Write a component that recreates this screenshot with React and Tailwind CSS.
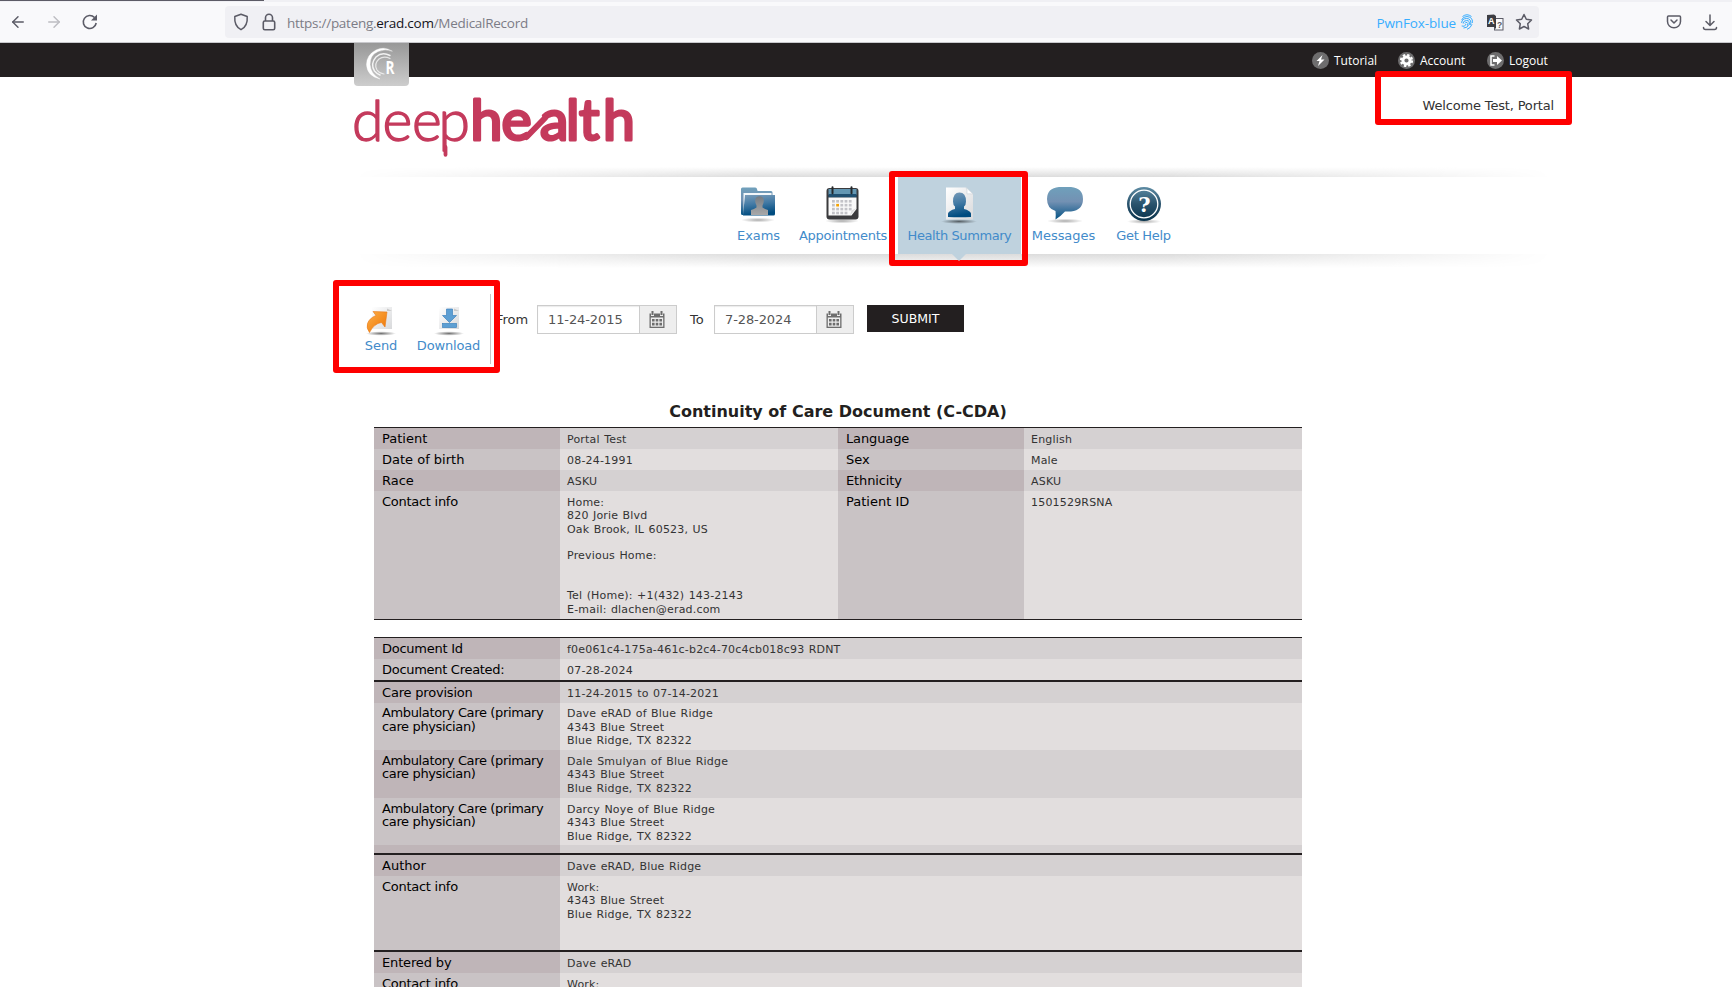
import React from "react";
import { ArrowLeft, ArrowRight } from "lucide-react";

const RED = "absolute rounded-[3px] border-[6px] border-[#fe0000] pointer-events-none";

function CalendarGlyph() {
  return (
    <svg width="16" height="17" viewBox="0 0 16 17" fill="#6d6d6d" className="mr-[2px]">
      <path d="M2.5 0h2v4h-2zM11.5 0h2v4h-2z" />
      <path d="M0.5 2.5h1.5v2.5h3V2.5h6v2.5h3V2.5h1.5V17H.5z" />
      <path fill="#eee" d="M1.8 6.5h12.4v9.2H1.8z" />
      <path d="M3 8h2.6v2.6H3zM6.7 8h2.6v2.6H6.7zM10.4 8H13v2.6h-2.6zM3 11.8h2.6v2.6H3zM6.7 11.8h2.6v2.6H6.7zM10.4 11.8H13v2.6h-2.6z" />
    </svg>
  );
}

function DateInput({ value }) {
  return (
    <div className="flex h-[29px] w-[140px] border border-[#ccc] bg-white shadow-[inset_0_1px_1px_rgba(0,0,0,0.08)]">
      <div className="flex w-[101px] items-center pl-[10px] text-[13px] tracking-[-0.1px] text-[#555]">{value}</div>
      <div className="flex flex-1 items-center justify-center border-l border-[#ccc] bg-[#eee]">
        <CalendarGlyph />
      </div>
    </div>
  );
}

function Defs() {
  return (
    <svg width="0" height="0" className="absolute">
      <defs>
        <linearGradient id="blue" x1="0" y1="0" x2="0" y2="1">
          <stop offset="0" stopColor="#6fa0bb" />
          <stop offset="0.45" stopColor="#7391b3" />
          <stop offset="1" stopColor="#045385" />
        </linearGradient>
        <linearGradient id="front" x1="0" y1="0" x2="0.2" y2="1">
          <stop offset="0" stopColor="#7b9dba" />
          <stop offset="0.5" stopColor="#4179a4" />
          <stop offset="1" stopColor="#004c80" />
        </linearGradient>
        <linearGradient id="grey" x1="0" y1="0" x2="0" y2="1">
          <stop offset="0" stopColor="#747b83" />
          <stop offset="1" stopColor="#a9a9a9" />
        </linearGradient>
        <linearGradient id="dark" x1="0" y1="0" x2="0" y2="1">
          <stop offset="0" stopColor="#5d8ba3" />
          <stop offset="0.5" stopColor="#2a536d" />
          <stop offset="1" stopColor="#09334c" />
        </linearGradient>
        <linearGradient id="paper" x1="0" y1="0" x2="1" y2="1">
          <stop offset="0" stopColor="#ffffff" />
          <stop offset="1" stopColor="#d8d9db" />
        </linearGradient>
        <linearGradient id="orange" x1="0" y1="0" x2="1" y2="1">
          <stop offset="0" stopColor="#fdb04a" />
          <stop offset="1" stopColor="#ee7300" />
        </linearGradient>
        <radialGradient id="shade">
          <stop offset="0" stopColor="#000" stopOpacity="0.55" />
          <stop offset="1" stopColor="#000" stopOpacity="0" />
        </radialGradient>
      </defs>
    </svg>
  );
}

function ExamsIcon() {
  return (
    <svg width="36" height="38" viewBox="0 0 36 38">
      <ellipse cx="17" cy="34" rx="17" ry="2.4" fill="url(#shade)" opacity="0.6" />
      <path d="M0 3q0-1.500 1.500-1.500h12.500q1.200 0 1.800 1l.8 2.500H30q1.500 0 1.500 1.500V29H1.500Q0 29 0 27.500z" fill="url(#blue)" />
      <path d="M2.500 7H30.500v4H4v18H2.500z" fill="#f3f7fa" />
      <path d="M4 9h30V28q0 1.500-1.500 1.500H2z" fill="url(#front)" />
      <path d="M10 29v-5q3-1 5.500-2.500v-2q-2.500-5-.3-8 3.300-2.500 6.600 0 2.200 3-.3 8v2q2.500 1.500 5.500 2.500v5z" fill="url(#grey)" />
    </svg>
  );
}

function AppointmentsIcon() {
  const dots = [];
  for (let r = 0; r < 4; r++)
    for (let c = 0; c < 5; c++) if (!(r === 3 && c > 3)) dots.push([7 + c * 4.2, 14 + r * 3.9, r === 1 && c === 1]);
  return (
    <svg width="36" height="38" viewBox="0 0 36 38">
      <ellipse cx="17" cy="35" rx="17" ry="2.400" fill="url(#shade)" opacity="0.6" />
      <rect x="1.500" y="2" width="32" height="31.500" rx="3" fill="#3b3b3d" />
      <path d="M3.500 3h28v6h-28z" fill="#6397b3" />
      <path d="M3.500 8h28v3.500h-28z" fill="#1f4f70" />
      <path d="M3.500 11.500h28V23l-5 6.500h-23z" fill="#fafafa" />
      <path d="M31.500 22l-5 2.500-1.500 5z" fill="#dedede" />
      {dots.map(([x, y, on], i) => (
        <rect key={i} x={x} y={y} width="2.800" height="2.600" fill={on ? "#f6a300" : "#c3c3c8"} />
      ))}
      <path d="M7.500 1.200v6M26.500 1.200v6" stroke="#25282b" strokeWidth="2" strokeLinecap="round" />
    </svg>
  );
}

function HealthIcon() {
  return (
    <svg width="38" height="38" viewBox="0 0 38 38" className="-ml-[2px]">
      <ellipse cx="19" cy="35.500" rx="18" ry="2.400" fill="url(#shade)" />
      <path d="M6 1.500h20l7 6.500v25.500H6z" fill="url(#paper)" />
      <path d="M26 1.500l7 6.500q-5-.500-6 0 .5-4-1-6.500z" fill="#fff" stroke="#c7d0d6" strokeWidth="0.6" />
      <path d="M8 31v-3.500q1-3 7-4.500v-2.500q-2-1.500-2-5 0-9 6.500-9t6.500 9q0 3.500-2 5V23q6 1.500 7 4.500V31q-11 .6-23 0z" fill="url(#front)" />
    </svg>
  );
}

function MessagesIcon() {
  return (
    <svg width="38" height="38" viewBox="0 0 38 38" className="ml-[2px]">
      <ellipse cx="19" cy="35" rx="18" ry="2.400" fill="url(#shade)" opacity="0.6" />
      <path d="M13 1h12q12 1 12 12t-12 12.500h-6Q14 31 9.500 33.500q.5-4 0-8.500Q1 22.500 1 13 1 2 13 1z" fill="url(#blue)" />
    </svg>
  );
}

function HelpIcon() {
  return (
    <svg width="36" height="38" viewBox="0 0 36 38" className="ml-[2px]">
      <ellipse cx="18" cy="35.500" rx="17" ry="2.400" fill="url(#shade)" opacity="0.6" />
      <circle cx="18" cy="18" r="17" fill="url(#dark)" />
      <circle cx="18" cy="18" r="13.800" fill="none" stroke="#fff" strokeWidth="1.300" />
      <text x="18.500" y="25.500" textAnchor="middle" fontSize="21" fontWeight="700" fill="#fff" fontFamily="DejaVu Serif, serif">?</text>
    </svg>
  );
}

const NAV = [
  ["Exams", ExamsIcon, "w-[61px]", "tracking-[-0.05px]"],
  ["Appointments", AppointmentsIcon, "w-[108px]", "tracking-[-0.25px]"],
  ["Health Summary", HealthIcon, "w-[123px] ml-px", "tracking-[-0.42px]"],
  ["Messages", MessagesIcon, "w-[85px]", "tracking-[-0.05px]"],
  ["Get Help", HelpIcon, "w-[74px]", "tracking-[-0.3px] ml-px"],
];

function BrowserBar() {
  return (
    <div className="h-[43px] border-b border-[#c8c8cc] bg-[#f9f9fb] font-['Open_Sans',sans-serif]">
      <div className="flex h-[2px] bg-[#f0f0f4]">
        <div className="h-[1px] w-[264px] bg-[#5c5b66]" />
      </div>
      <div className="flex items-center pt-[4px] text-[#5b5b66]">
        <div className="flex w-[225px] items-center pl-[9px]">
          <ArrowLeft size={18} strokeWidth={1.9} />
          <ArrowRight size={18} strokeWidth={1.9} className="ml-[18px] text-[#bdbdc2]" />
          <svg className="ml-[18px]" width="18" height="18" viewBox="0 0 18 18" fill="none" stroke="currentColor" strokeWidth="1.600">
            <path d="M15.200 10A6.500 6.500 0 1 1 13.500 4.500" />
            <path d="M16 1.500v6h-6z" fill="currentColor" stroke="none" />
          </svg>
        </div>
        <div className="flex h-[32px] w-[1314px] items-center rounded-[4px] bg-[#f0f0f4]">
          <svg className="ml-[8px]" width="16" height="18" viewBox="0 0 16 18" fill="none" stroke="currentColor" strokeWidth="1.500" strokeLinejoin="round">
            <path d="M8 1.200l6.200 2.300c.4 5-1 10.500-6.200 13.200C2.800 14 1.400 8.500 1.800 3.500z" />
          </svg>
          <svg className="ml-[13px]" width="14" height="18" viewBox="0 0 14 18" fill="none" stroke="currentColor" strokeWidth="1.600">
            <rect x="1.300" y="8" width="11.400" height="8.700" rx="1.500" />
            <path d="M3.500 8V4.800a3.500 3.500 0 0 1 7 0V8" />
          </svg>
          <div className="ml-[11px] mt-[2px] flex-1 text-[13.500px] tracking-[-0.27px] text-[#7c7c86]">
            https://pateng.<span className="text-[#15141a]">erad.com</span>/MedicalRecord
          </div>
          <div className="mt-[2px] text-[13.500px] tracking-[-0.13px] text-[#37adff]">PwnFox-blue</div>
          <svg className="ml-[5px]" width="12" height="16" viewBox="0 0 12 16" fill="none" stroke="#37adff" strokeWidth="1">
            <path d="M1.500 2.500q4.500-3.500 9 0M.7 6q1-3.500 5.300-3.500T11.300 6v3M.7 9q0-4.500 5-4.500t4 6.500M2.200 9.500q0-3 3.500-3t2.500 4.500M4 9.500q.5-1.500 2-1t.5 3M.7 12q3 1.500 4.500-2M2.500 14q4 0 5-3M6 15.300q3.500-1 5-5" />
          </svg>
          <svg className="ml-[14px]" width="17" height="17" viewBox="0 0 17 17">
            <rect x="7.500" y="4.500" width="8.500" height="11.500" fill="#f9f9fb" stroke="#5b5b66" />
            <path d="M0 1l7-.5 2 1.500v13l-2-2H0z" fill="#3c3c42" />
            <text x="1" y="10" fontSize="9" fontWeight="700" fill="#fff" fontFamily="Liberation Sans, sans-serif">A</text>
            <text x="10" y="13.500" fontSize="8.500" fontWeight="700" fill="#5b5b66" fontFamily="Liberation Sans, sans-serif">?</text>
          </svg>
          <svg className="ml-[11px]" width="18" height="18" viewBox="0 0 18 18" fill="none" stroke="currentColor" strokeWidth="1.500" strokeLinejoin="round">
            <path d="M9 1.500l2.300 4.800 5.200.7-3.800 3.700.9 5.300L9 13.500 4.400 16l.9-5.300L1.500 7l5.200-.7z" />
          </svg>
          <div className="w-[6px]" />
        </div>
        <svg className="ml-[127px]" width="16" height="14" viewBox="0 0 16 14" fill="none" stroke="currentColor" strokeWidth="1.500" strokeLinecap="round" strokeLinejoin="round">
          <path d="M2.500 1h11q1 0 1 1v4.500a6.500 6.300 0 0 1-13 0V2q0-1 1-1z" />
          <path d="M5 5l3 3 3-3" />
        </svg>
        <svg className="ml-[20px]" width="16" height="17" viewBox="0 0 16 17" fill="none" stroke="currentColor" strokeWidth="1.500" strokeLinecap="round" strokeLinejoin="round">
          <path d="M8 1v10M4 7.500l4 4 4-4M1.500 13.500q0 2 2 2h9q2 0 2-2" />
        </svg>
      </div>
    </div>
  );
}

function TopLink({ label, icon, className }) {
  return (
    <div className={`flex items-center text-[12px] text-white ${className}`}>
      <svg width="17" height="17" viewBox="0 0 17 17" className="mr-[5px]">
        <circle cx="8.500" cy="8.500" r="8.500" fill="#6e6d6e" />
        {icon}
      </svg>
      <span className="pt-px">{label}</span>
    </div>
  );
}

function TopBar() {
  return (
    <div className="flex h-[34px] items-start bg-[#231f20] pl-[354px] font-['Open_Sans',sans-serif]">
      <div className="relative h-[43px] w-[55px] rounded-b-[4px] bg-linear-to-b from-[#989898] to-[#cdcdcd]">
        <svg width="55" height="43" viewBox="0 0 55 43" fill="none" stroke="#fff" strokeLinecap="round" className="overflow-visible">
          <path d="M38 8Q30 3 22 7Q12.500 12 12.500 21.500Q13 33 26 36Q16.500 31 16 21.500Q16 12 24 8.500Q31 5.500 38 8z" fill="#fff" stroke="#fff" strokeWidth="0.400" />
          <path d="M36 12.500Q28 8.500 22 14Q16 21 20.500 28Q23 31 26 32" strokeWidth="1.400" opacity="0.850" />
          <path d="M36 15.500Q30 12.500 25 16Q19.500 21 23 27Q25.500 30.500 30 31" strokeWidth="1.200" opacity="0.700" />
          <text x="31.500" y="31" fontSize="17" fontWeight="700" fill="#fff" stroke="none" fontFamily="Open Sans, sans-serif" textLength="9" lengthAdjust="spacingAndGlyphs">R</text>
        </svg>
      </div>
      <div className="flex h-[34px] items-center pl-[903px] pt-px">
        <TopLink label="Tutorial" className="w-[86px]" icon={<path d="M10.500 3L4.500 9h3L6 14l6.500-6.500H9z" fill="#fff" />} />
        <TopLink
          label="Account"
          className="w-[89px]"
          icon={
            <g>
              <circle cx="8.500" cy="8.500" r="3.600" fill="none" stroke="#fff" strokeWidth="3" />
              <circle cx="8.500" cy="8.500" r="5.600" fill="none" stroke="#fff" strokeWidth="2" strokeDasharray="2.400 2" />
            </g>
          }
        />
        <TopLink
          label="Logout"
          className=""
          icon={
            <g>
              <path d="M7.500 4H4v9h3.500" fill="none" stroke="#fff" strokeWidth="1.500" />
              <path d="M6 7h4V4l5 4.500L10 13v-3H6z" fill="#fff" />
            </g>
          }
        />
      </div>
    </div>
  );
}

function Logo() {
  return (
    <svg width="282" height="66" viewBox="0 0 282 66" fill="#c43a5c" stroke="#c43a5c" strokeLinejoin="round" strokeLinecap="round" className="overflow-visible">
      <text x="-2 28.500 58 84.500" y="45.500" fontFamily="Lato, sans-serif" fontWeight="300" fontSize="57" strokeWidth="1.400">deep</text>
      <path d="M91.500 52V59.800" strokeWidth="3.800" />
      <text x="116.500 147.500 186 212 225 249" y="45" fontFamily="Lato, sans-serif" fontWeight="400" fontSize="57" strokeWidth="3">health</text>
      <path d="M172.500 42L191 23" strokeWidth="6" />
    </svg>
  );
}

const FADE = "mask-[linear-gradient(to_right,transparent,black_34%,black_68%,transparent)]";

function Nav() {
  return (
    <div className="flex flex-col">
      <div className={`h-[10px] bg-linear-to-t from-[#dcdcdc] to-white ${FADE}`} />
      <div className="flex h-[77px] justify-start bg-white pl-[374px]">
        {NAV.map(([label, Icon, w, tracking]) => (
          <div key={label} className={`relative flex flex-col items-center pt-[9px] ${w} ${label === "Health Summary" ? "bg-[#bfd2de]" : ""}`}>
            <Icon />
            <span className={`mt-[2px] text-[13px] leading-[20px] whitespace-nowrap text-[#428bca] ${tracking}`}>{label}</span>
            {label === "Health Summary" && (
              <div className="absolute top-[77px] left-[54px] z-10 h-[7px] w-[14px] bg-[#bfd2de] [clip-path:polygon(0_0,100%_0,50%_100%)]" />
            )}
          </div>
        ))}
      </div>
      <div className={`h-[14px] bg-linear-to-b from-[#dcdcdc] to-white ${FADE}`} />
    </div>
  );
}

function SendIcon() {
  return (
    <svg width="34" height="30" viewBox="0 0 34 30">
      <ellipse cx="17" cy="27.500" rx="15" ry="2.200" fill="url(#shade)" />
      <path d="M8 1h20v22H8z" fill="url(#paper)" />
      <path d="M23 2.500l5 2.500h-5z" fill="#c9c9c9" />
      <path d="M9 5.500l14 .5L21 21l-3.500-4.500Q10 17.500 5.500 26.500 2 22 3.500 17.500q2-5.500 8.500-8z" fill="url(#orange)" stroke="#e77817" strokeWidth="0.600" />
    </svg>
  );
}

function DownloadIcon() {
  return (
    <svg width="34" height="30" viewBox="0 0 34 30">
      <ellipse cx="17" cy="27.500" rx="15" ry="2.200" fill="url(#shade)" />
      <path d="M7 1h20v22H7z" fill="url(#paper)" />
      <path d="M22 2.500l5 2.500h-5z" fill="#c9c9c9" />
      <path d="M14.500 3h6v6.500h4L17.500 16.500l-7-7h4z" fill="#5d9fd3" stroke="#3f83bd" strokeWidth="0.700" />
      <rect x="10.500" y="17.500" width="14" height="4" fill="#5d9fd3" stroke="#3f83bd" strokeWidth="0.700" />
    </svg>
  );
}

function Actions() {
  return (
    <div className="flex items-start text-[13px] text-[#333]">
      <div className="flex h-[70px] w-[137px] items-start border-r border-[#c6c6c6] pt-[12px] text-[#428bca]">
        <div className="flex w-[54px] flex-col items-center">
          <SendIcon />
          <span className="leading-[20px]">Send</span>
        </div>
        <div className="flex w-[81px] flex-col items-center">
          <DownloadIcon />
          <span className="leading-[20px] tracking-[-0.15px]">Download</span>
        </div>
      </div>
      <div className="flex items-center pt-[11px]">
        <span className="ml-[5px] w-[41px]">From</span>
        <DateInput value="11-24-2015" />
        <span className="mr-[11px] ml-[13px] w-[13px]">To</span>
        <DateInput value="7-28-2024" />
        <div className="mb-[2px] ml-[13px] flex h-[27px] w-[97px] items-center justify-center bg-[#231f20] pt-px text-[12.500px] text-white">SUBMIT</div>
      </div>
    </div>
  );
}

const LABEL = "w-[186px] shrink-0 pl-[8px] text-[13px] text-black";
const VALUE = "pl-[7px] text-[11px] text-[#333] whitespace-pre-line tracking-[0.19px] [word-spacing:0.7px]";

const CARE = "Ambulatory Care (primary care physician)";
const ADDRESS = "4343 Blue Street\nBlue Ridge, TX 82322";

const TRACKING = {
  [CARE]: "tracking-[-0.36px]",
  "Document Created:": "tracking-[-0.29px]",
  "Document Id": "tracking-[-0.25px]",
  "Contact info": "tracking-[-0.27px]",
  "Care provision": "tracking-[-0.2px]",
  "Entered by": "tracking-[-0.15px]",
  Language: "tracking-[-0.12px]",
  Ethnicity: "tracking-[-0.12px]",
};

function Row({ h, pad = "pt-[4px]", dark, cells }) {
  return (
    <div className={`flex leading-[13.330px] ${h}`}>
      {cells.map((c, i) =>
        i % 2 === 0 ? (
          <div key={i} className={`${LABEL} ${pad} ${TRACKING[c] || ""} ${dark ? "bg-[#bfb5b8]" : "bg-[#c9c3c5]"}`}>{c}</div>
        ) : (
          <div key={i} className={`flex-1 ${VALUE} ${pad} ${dark ? "bg-[#d5d1d2]" : "bg-[#e2dede]"}`}>
            <div className="pt-px">{c}</div>
          </div>
        )
      )}
    </div>
  );
}

export default function App() {
  return (
    <div className="relative h-[987px] w-[1732px] overflow-hidden bg-white font-['DejaVu_Sans',sans-serif]">
      <Defs />
      <BrowserBar />
      <TopBar />
      <div className="flex h-[90px] justify-between pr-[178px] pl-[354px]">
        <div className="pt-[18px]">
          <Logo />
        </div>
        <div className="pt-[19px] text-[13px] leading-[20px] tracking-[-0.17px] text-[#333]">Welcome Test, Portal</div>
      </div>
      <div className="pr-[180px] pl-[354px]">
        <Nav />
      </div>
      <div className="pt-[26px] pl-[354px]">
        <Actions />
      </div>
      <div className="mt-[35px] ml-[374px] w-[928px]">
        <h1 className="h-[28px] pt-[3px] text-center text-[16px] leading-[20px] font-bold text-[#231f20]">
          Continuity of Care Document (C-CDA)
        </h1>
        <div className="border-y border-[#231f20]">
          <Row h="h-[21px]" dark cells={["Patient", "Portal Test", "Language", "English"]} />
          <Row h="h-[21px]" cells={["Date of birth", "08-24-1991", "Sex", "Male"]} />
          <Row h="h-[21px]" dark cells={["Race", "ASKU", "Ethnicity", "ASKU"]} />
          <Row
            h="h-[128px]"
            cells={[
              "Contact info",
              "Home:\n820 Jorie Blvd\nOak Brook, IL 60523, US\n\nPrevious Home:\n\n\nTel (Home): +1(432) 143-2143\nE-mail: dlachen@erad.com",
              "Patient ID",
              "1501529RSNA",
            ]}
          />
        </div>
        <div className="mt-[17px] border-t border-[#231f20]">
          <Row h="h-[21px]" dark cells={["Document Id", "f0e061c4-175a-461c-b2c4-70c4cb018c93 RDNT"]} />
          <Row h="h-[21px]" cells={["Document Created:", "07-28-2024"]} />
          <div className="h-[2px] bg-[#231f20]" />
          <Row h="h-[21px]" dark cells={["Care provision", "11-24-2015 to 07-14-2021"]} />
          <Row h="h-[47px]" pad="pt-[3.300px]" cells={[CARE, "Dave eRAD of Blue Ridge\n" + ADDRESS]} />
          <Row h="h-[48px]" dark cells={[CARE, "Dale Smulyan of Blue Ridge\n" + ADDRESS]} />
          <Row h="h-[47px]" cells={[CARE, "Darcy Noye of Blue Ridge\n" + ADDRESS]} />
          <Row h="h-[8px]" dark cells={["", ""]} />
          <div className="h-[2px] bg-[#231f20]" />
          <Row h="h-[21px]" dark cells={["Author", "Dave eRAD, Blue Ridge"]} />
          <Row h="h-[74px]" cells={["Contact info", "Work:\n" + ADDRESS]} />
          <div className="h-[2px] bg-[#231f20]" />
          <Row h="h-[21px]" dark cells={["Entered by", "Dave eRAD"]} />
          <Row h="h-[21px]" cells={["Contact info", "Work:"]} />
        </div>
      </div>
      <div className={`${RED} top-[71px] left-[1375px] h-[54px] w-[197px]`} />
      <div className={`${RED} top-[171px] left-[889px] h-[95px] w-[139px]`} />
      <div className={`${RED} top-[280px] left-[333px] h-[93px] w-[167px]`} />
    </div>
  );
}
